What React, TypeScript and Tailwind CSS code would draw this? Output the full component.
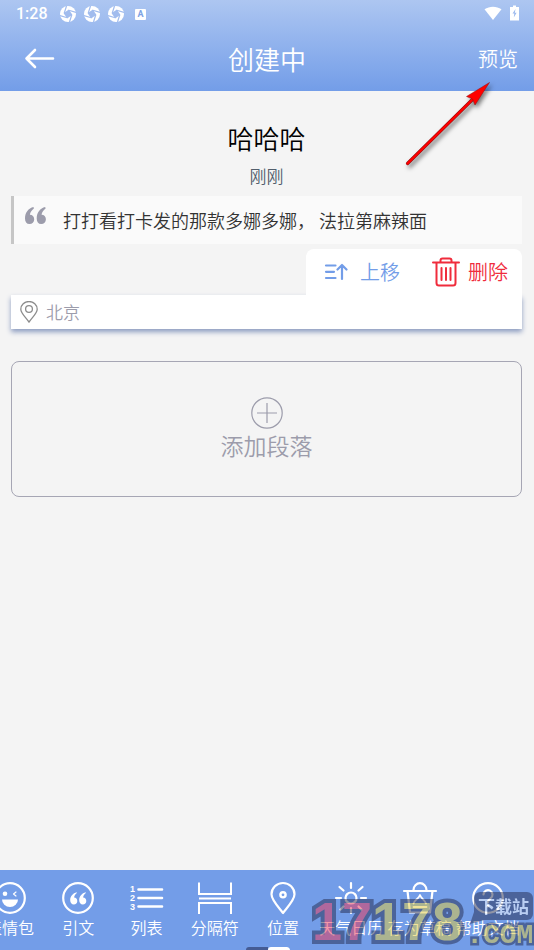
import { useState } from 'react';
import type { ReactNode } from 'react';

const AppIcon = () => (
  <svg className="size-4" viewBox="0 0 16 16">
    <circle cx="8" cy="8" r="8" fill="white" />
    <g stroke="#a1bcee" fill="#a1bcee">
      <path d="M8.800 3.600L12.400 8.800L7.200 12.400L3.600 7.200z" stroke="none" />
      <path d="M4.200 7.200L6.500 0M8.800 4.200L16 6.500M11.800 8.800L9.500 16M7.200 11.800L0 9.500" strokeWidth="1.200" />
    </g>
  </svg>
);

const StatusBar = () => (
  <div className="flex h-7 items-center justify-between pl-4 pr-[15px]">
    <div className="flex items-center">
      <span className="mr-3 w-8 font-[Roboto,sans-serif] text-base font-medium">1:28</span>
      <div className="flex gap-2">
        <AppIcon />
        <AppIcon />
        <AppIcon />
      </div>
      <span className="ml-[11px] flex size-[11px] items-center justify-center rounded-[1px] bg-white font-[Roboto,sans-serif] text-[9px] leading-none font-bold text-[#7da2e4]">
        A
      </span>
    </div>
    <div className="flex items-center gap-2 pb-0.5">
      <svg className="h-4 w-[18px]" viewBox="0 0 18 16">
        <path d="M0.500 4.200C5.500 0.800 12.500 0.800 17.500 4.200L9 15z" fill="white" />
      </svg>
      <svg className="h-4 w-[9px]" viewBox="0 0 9 16">
        <path d="M3 0.500h3v1.500h3v13.500h-9v-13.500h3z" fill="white" />
        <path d="M5.500 4L2.500 8.500h1.800L3.800 12.500L6.600 7.800H4.800z" fill="#9dbaee" />
      </svg>
    </div>
  </div>
);

const tools: { label: string; icon: ReactNode }[] = [
  {
    label: '表情包',
    icon: (
      <>
        <circle cx="17" cy="17" r="14.800" />
        <circle cx="12" cy="12.800" r="2.300" fill="white" stroke="none" />
        <path d="M23 11l-2.500 2l2.500 2" strokeWidth="1.200" />
        <path d="M9 18.500h16a8 7.500 0 0 1-16 0z" fill="white" stroke="none" />
      </>
    ),
  },
  {
    label: '引文',
    icon: (
      <>
        <circle cx="17" cy="17" r="14.800" />
        <g fill="white" stroke="none">
          <path d="M15.800 11.300c-4 1-6.600 4-6.600 8c0 2.600 1.500 4.200 3.600 4.200s3.500-1.500 3.500-3.500s-1.300-3.400-3.200-3.400c0.200-1.800 1.200-3.300 2.700-4.500z" />
          <path d="M24.800 11.300c-4 1-6.600 4-6.600 8c0 2.600 1.500 4.200 3.600 4.200s3.500-1.500 3.500-3.500s-1.300-3.400-3.200-3.400c0.200-1.800 1.200-3.300 2.700-4.500z" />
        </g>
      </>
    ),
  },
  {
    label: '列表',
    icon: (
      <>
        <path d="M8.500 8.500h23.500M8.500 17h23.500M8.500 25.500h23.500" strokeWidth="2.600" />
        <g fill="white" stroke="none" fontFamily="Liberation Sans, sans-serif" fontWeight="700" fontSize="9">
          <text x="0" y="11">1</text>
          <text x="0" y="20">2</text>
          <text x="0" y="29">3</text>
        </g>
      </>
    ),
  },
  {
    label: '分隔符',
    icon: <path d="M1 1.500V13h32V1.500M1 17.500h32M1 33V22h32v11" strokeWidth="2" strokeLinecap="butt" strokeLinejoin="miter" />,
  },
  {
    label: '位置',
    icon: (
      <>
        <path d="M17 32C12 25.500 5.500 19 5.500 13.300a11.500 11.300 0 0 1 23 0C28.500 19 22 25.500 17 32z" />
        <circle cx="17" cy="13.800" r="2.600" strokeWidth="2.400" />
      </>
    ),
  },
  {
    label: '天气日历',
    icon: (
      <>
        <circle cx="17" cy="17" r="5.500" />
        <path d="M17 2v5M17 27v5M2 17h5M27 17h5M5.500 6l4 3.500M28.500 6l-4 3.500M6.500 28.500l3-3M27.500 28.500l-3-3" />
      </>
    ),
  },
  {
    label: '存为草稿',
    icon: (
      <>
        <path d="M1 10h32M4.500 10l2.500 21.500h20L29.500 10M10.500 9a6.500 6.800 0 0 1 13 0" />
        <path d="M10.500 22.500c1-3.500 5-4.500 6.500-8.500c1 3.500 4.500 4.500 6 8.500M10.500 26h13" strokeWidth="1.800" />
      </>
    ),
  },
  {
    label: '帮助文档',
    icon: (
      <>
        <circle cx="17" cy="17" r="14.800" />
        <path d="M12.500 13.500a4.500 4.500 0 1 1 7 3.800c-1.800 1.200-2.500 2-2.500 4" />
        <circle cx="17" cy="25" r="1.500" fill="white" stroke="none" />
      </>
    ),
  },
];

const Watermark = () => (
  <div
    className="pointer-events-none absolute right-0 bottom-0 flex h-[60px] w-[222px] gap-1 overflow-hidden opacity-50"
    aria-hidden="true"
  >
    <div className="font-['Liberation_Sans',sans-serif] text-[54px] leading-[62px] font-bold [paint-order:stroke_fill] [-webkit-text-stroke:8px_#252b4e]">
      <span className="text-[#ec3454]">17</span>
      <span className="text-[#e4cb3a]">178</span>
    </div>
    <div className="flex flex-1 flex-col">
      <div className="relative mt-0.5 ml-2 mr-px rounded-md bg-[#252b4e] text-center text-[17px] leading-7 font-bold text-white">
        下载站
        <svg className="absolute -bottom-1 -left-1 size-4" viewBox="0 0 16 16" fill="#252b4e">
          <path d="M4 4L0 16L14 12z" />
        </svg>
      </div>
      <span className="mt-0.5 font-['Liberation_Mono',monospace] text-[28px] leading-7 font-bold text-[#e4cb3a] [paint-order:stroke_fill] [-webkit-text-stroke:5px_#252b4e]">
        .COM
      </span>
    </div>
  </div>
);

const App = () => {
  const [active, setActive] = useState('');

  return (
    <div className="relative flex min-h-screen flex-col overflow-hidden bg-[#f4f4f4] font-['Noto_Sans_CJK_SC',sans-serif] font-[350]">
      <header className="bg-linear-to-b from-[#adc6f1] to-[#739de8] text-white">
        <StatusBar />
        <nav className="grid h-[63px] grid-cols-3 items-center px-4 pb-0.5">
          <button className="ml-2 justify-self-start" aria-label="返回">
            <svg className="h-6 w-8" viewBox="0 0 32 24" fill="none" stroke="white" strokeWidth="2.600" strokeLinecap="round" strokeLinejoin="round">
              <path d="M11 3L2.500 11.500L11 20M2.500 11.500H29" />
            </svg>
          </button>
          <h1 className="text-center text-[26px]">创建中</h1>
          <button className="justify-self-end text-xl">预览</button>
        </nav>
      </header>

      <main className="flex-1 pt-[29px] pr-3 pl-[11px]">
        <h2 className="text-center text-[26px] leading-9 text-black">哈哈哈</h2>
        <p className="mt-2 text-center text-[17px] leading-6 text-[#525e6c]">刚刚</p>

        <blockquote className="mt-2 flex h-12 border-l-3 border-[#c6c6c6] bg-[#fafafa] pl-[11px]">
          <svg className="mt-[11px] mr-[17px] h-[17px] w-[21px] shrink-0" viewBox="0 0 21 17" fill="#9c9cab">
            <path d="M8.500 0C3.500 1 0 5.500 0 11.500C0 15 1.600 17 4.500 17C7.200 17 9.200 15.200 9.200 12.300C9.200 9.500 7.400 7.700 4.900 7.700C5.200 5.500 6.500 3.500 8.900 1.600z" />
            <path d="M20.200 0C15.200 1 11.700 5.500 11.700 11.500C11.700 15 13.300 17 16.200 17C18.900 17 20.900 15.200 20.900 12.300C20.900 9.500 19.100 7.700 16.600 7.700C16.900 5.500 18.200 3.500 20.600 1.600z" />
          </svg>
          <p className="self-center text-lg text-[#333333]">打打看打卡发的那款多娜多娜， 法拉第麻辣面</p>
        </blockquote>

        <div className="mt-[5px] flex justify-end">
          <div className="flex h-[46px] items-center gap-8 rounded-t-lg bg-white pr-[14px] pl-[18px] text-xl">
            <button className="flex items-center gap-3 text-[#739de8]">
              <svg className="h-5 w-6" viewBox="0 0 24 20" fill="none" stroke="currentColor" strokeWidth="2.200" strokeLinecap="round" strokeLinejoin="round">
                <path d="M2 3.500h9.500M2 9.800h8M2 16h9.500M18 17V3M13.500 7.500L18 3L22.500 7.500" />
              </svg>
              上移
            </button>
            <button className="flex items-center gap-2 text-[#f02c3c]">
              <svg className="h-[30px] w-7" viewBox="0 0 28 30" fill="none" stroke="currentColor" strokeWidth="2" strokeLinecap="round" strokeLinejoin="round">
                <path d="M1 5.500h26M8.500 5V3.500Q8.500 1.500 10.500 1.500h7Q19.500 1.500 19.500 3.500V5M4.500 6v20Q4.500 28.500 7 28.500h14Q23.500 28.500 23.500 26V6M9.500 11v12M14 11v12M18.500 11v12" />
              </svg>
              删除
            </button>
          </div>
        </div>

        <div className="flex h-[34px] items-center bg-white pl-2 text-[17px] text-[#9c9cab] shadow-[0_3px_5px_#8c9cc0]">
          <svg className="mr-[7px] h-[22px] w-5" viewBox="0 0 20 22" fill="none" stroke="#8c8c8c" strokeWidth="1.300">
            <path d="M10 21C6 15.500 1.800 12 1.800 8.200a8.200 7.700 0 0 1 16.400 0C18.200 12 14 15.500 10 21z" />
            <circle cx="10" cy="8" r="3.400" />
          </svg>
          北京
        </div>

        <button className="mt-8 flex h-[136px] w-full flex-col items-center justify-center rounded-lg border border-[#a6a6b4] text-[23px] leading-8 text-[#9c9cab]">
          <svg className="size-8" viewBox="0 0 32 32" fill="none" stroke="currentColor" strokeWidth="1.200">
            <circle cx="16" cy="16" r="15.200" />
            <path d="M16 6v20M6 16h20" />
          </svg>
          添加段落
        </button>
      </main>

      <footer className="relative h-20 overflow-hidden bg-[#739de8] text-white">
        <div className="-ml-6 mr-3 grid grid-cols-8 pt-[11px]">
          {tools.map(({ label, icon }) => (
            <button
              key={label}
              className="flex flex-col items-center text-base leading-6 whitespace-nowrap"
              aria-pressed={active === label}
              onClick={() => setActive(label)}
            >
              <svg className="size-[34px] overflow-visible" viewBox="0 0 34 34" fill="none" stroke="white" strokeWidth="2.200" strokeLinecap="round" strokeLinejoin="round">
                {icon}
              </svg>
              {label}
            </button>
          ))}
        </div>
        <div className="absolute bottom-0 left-[46%] flex h-[3px] w-11 overflow-hidden rounded-t-sm">
          <span className="flex-1 bg-[#455c94]" />
          <span className="flex-1 rounded-t-sm bg-white" />
        </div>
        <Watermark />
      </footer>

      {/* pointer towards the preview button */}
      <svg className="pointer-events-none absolute top-[78px] right-[34px] h-[92px] w-[100px] drop-shadow-[2px_3px_2px_#00000080]" viewBox="0 0 100 92">
        <path d="M7.500 85.500L75 19" stroke="#8c1010" strokeWidth="3.200" strokeLinecap="round" />
        <path d="M7.500 85.500L75 19" stroke="#ff0000" strokeWidth="2.400" strokeLinecap="round" />
        <path d="M89.500 4.500L66.500 18.500L72.500 21L75 27z" fill="#ff0000" stroke="#8c1010" strokeWidth="0.500" />
      </svg>
    </div>
  );
};

export default App;
